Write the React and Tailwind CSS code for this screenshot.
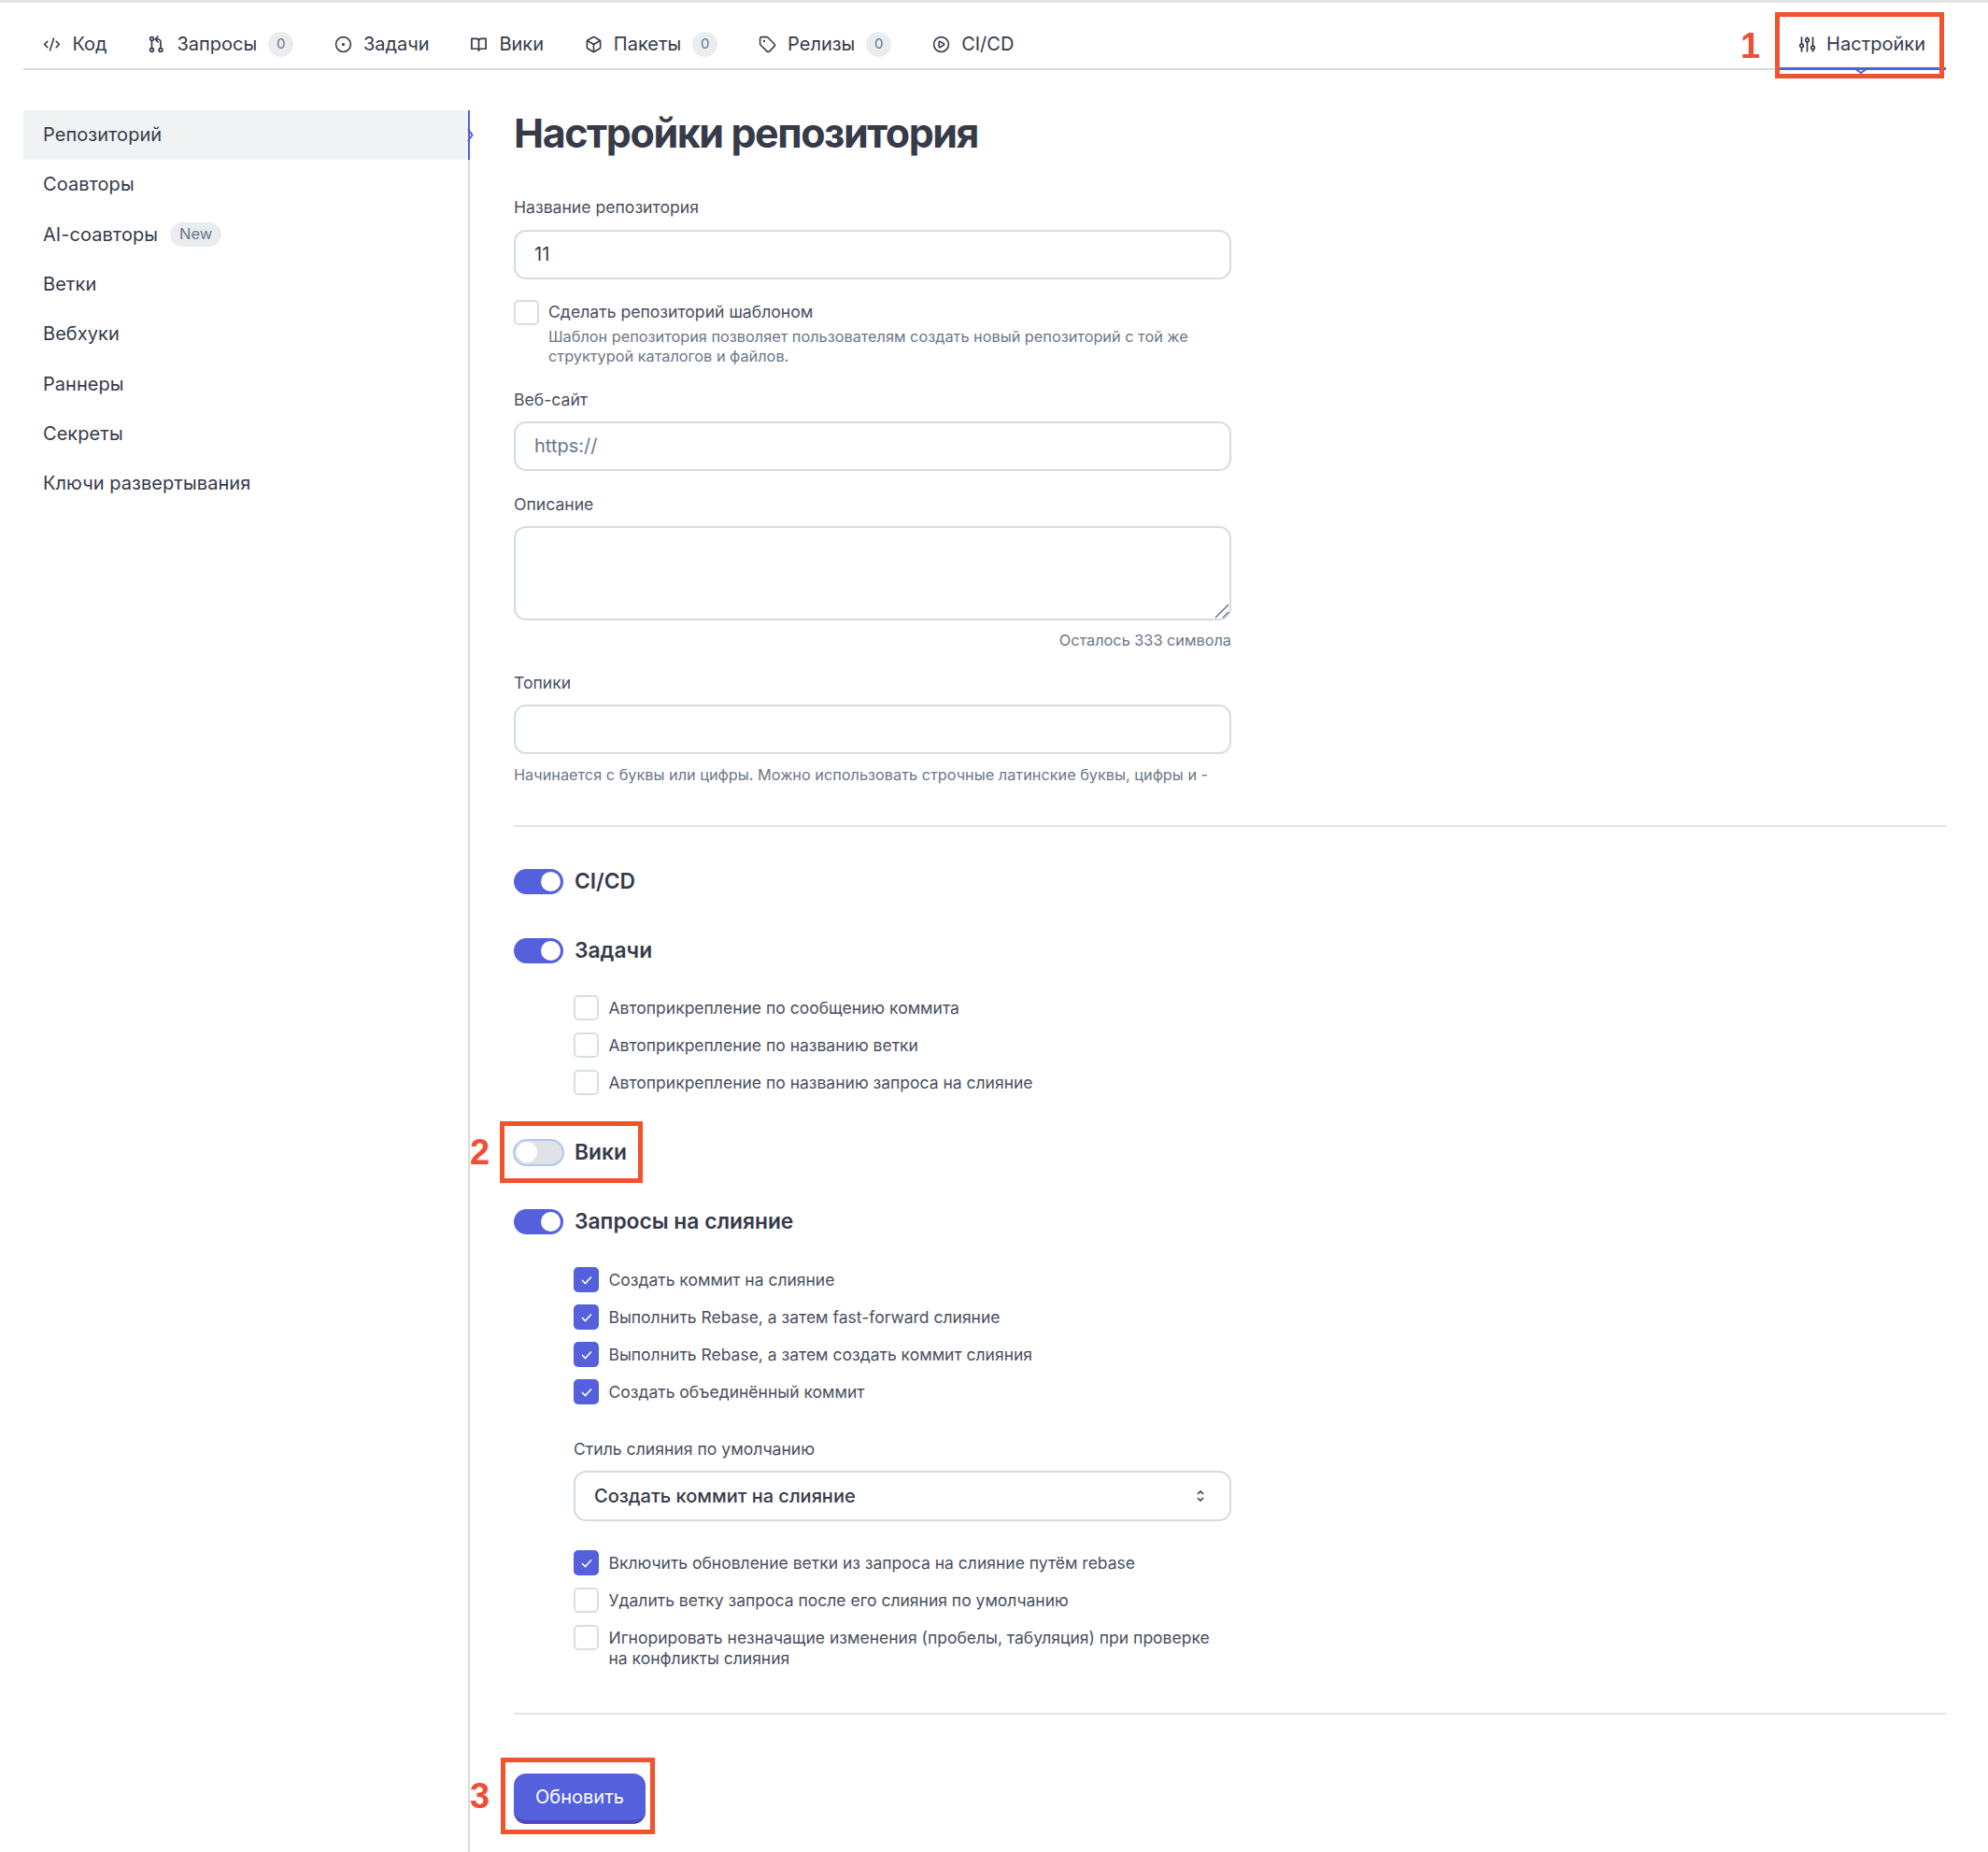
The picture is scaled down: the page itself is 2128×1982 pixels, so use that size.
import React from "react";
import { CircleDot, Box, Tag, CirclePlay, CodeXml } from "lucide-react";

const PullIcon = () => (
  <svg width="19" height="19" viewBox="0 0 19 19" fill="none" stroke="#363b4a" strokeWidth="1.7" strokeLinecap="round" strokeLinejoin="round">
    <circle cx="4.5" cy="3.5" r="1.9" />
    <circle cx="4.5" cy="15.5" r="1.9" />
    <circle cx="14" cy="15.5" r="1.9" />
    <path d="M4.5 5.4v8.2M14 13.6V7a3 3 0 0 0-3-3H8.5M11 1L8.2 4 11 7" />
  </svg>
);

const BookIcon = () => (
  <svg width="19" height="19" viewBox="0 0 20 20" fill="none" stroke="#363b4a" strokeWidth="1.8" strokeLinejoin="round">
    <path d="M2 3.5h5.5A2.5 2.5 0 0 1 10 6v11a2 2 0 0 0-2-2H2zM18 3.5h-5.5A2.5 2.5 0 0 0 10 6v11a2 2 0 0 1 2-2h6z" />
  </svg>
);

const NavItem = ({ icon: Icon, label, badge }) => (
  <div className="flex items-center gap-3 px-[21.9px] h-full">
    <Icon size={19} strokeWidth={2} className="text-[#363b4a] shrink-0" />
    <span className="text-[20px] leading-none">{label}</span>
    {badge !== undefined && (
      <span className="w-[27px] h-[27px] rounded-full bg-[#eaedf0] text-[#6b7789] text-[15px] flex items-center justify-center">{badge}</span>
    )}
  </div>
);

const Sliders = () => (
  <svg width="19" height="19" viewBox="0 0 19 19" fill="none" stroke="#363b4a" strokeWidth="1.7" strokeLinecap="round">
    <path d="M3.5 2v7M3.5 13v4M9.5 2v1M9.5 7v10M15.5 2v9M15.5 15v2" />
    <circle cx="3.5" cy="11" r="1.8" />
    <circle cx="9.5" cy="5" r="1.8" />
    <circle cx="15.5" cy="13" r="1.8" />
  </svg>
);

const SideItem = ({ children, active }) => (
  <div className={`relative h-[53.3px] flex items-center gap-[13px] pl-[21px] pb-px text-[20px] tracking-[0.05px] ${active ? "bg-[#f1f2f4]" : ""}`}>
    {children}
    {active && (
      <>
        <div className="absolute right-[-2px] top-0 bottom-0 w-[2px] bg-[#5460dc]" />
        <svg className="absolute right-[-6px] top-[18px]" width="7" height="17" viewBox="0 0 7 17" fill="none">
          <path d="M1 2l4.5 6.5L1 15" stroke="#5460dc" strokeWidth="2" />
        </svg>
      </>
    )}
  </div>
);

const Label = ({ children, className = "" }) => (
  <div className={`text-[17.6px] leading-[24px] text-[#4a5060] ${className}`}>{children}</div>
);

const Input = ({ children, muted, className = "" }) => (
  <div className={`w-[768px] h-[53px] border-2 border-[#d5dbe3] rounded-[13px] pl-[20px] pb-px flex items-center text-[20px] ${muted ? "text-[#6b7789]" : ""} ${className}`}>{children}</div>
);

const Hint = ({ children, className = "" }) => (
  <div className={`text-[16.3px] leading-[21px] text-[#6b7789] ${className}`}>{children}</div>
);

const Toggle = ({ on }) =>
  on ? (
    <div className="w-[53px] h-[27px] rounded-full bg-[#5460dc] flex items-center justify-end pr-[3px] shrink-0">
      <div className="w-[21px] h-[21px] rounded-full bg-white" />
    </div>
  ) : (
    <div className="w-[55px] h-[29px] -mx-px rounded-full bg-[#dfe3e8] border-2 border-[#b0c6f2] flex items-center pl-[2px] shrink-0">
      <div className="w-[22px] h-[22px] rounded-full bg-white" />
    </div>
  );

const ToggleRow = ({ on, children, className = "" }) => (
  <div className={`flex items-center gap-3 h-[28px] text-[22.8px] font-semibold ${className}`}>
    <Toggle on={on} />
    <span>{children}</span>
  </div>
);

const Check = ({ on, className = "" }) =>
  on ? (
    <div className={`w-[27px] h-[27px] rounded-[5px] bg-[#5460dc] flex items-center justify-center shrink-0 ${className}`}>
      <svg width="12" height="10" viewBox="0 0 12 10" fill="none">
        <path d="M1 5l3.5 3.5L11 1.5" stroke="white" strokeWidth="1.6" />
      </svg>
    </div>
  ) : (
    <div className={`w-[27px] h-[27px] rounded-[5px] border-2 border-[#d9dee5] bg-white shrink-0 ${className}`} />
  );

const CheckRow = ({ on, children, className = "" }) => (
  <div className={`flex items-start gap-[10.5px] text-[17.5px] leading-[22px] text-[#4a5060] ${className}`}>
    <Check on={on} />
    <span className="pt-[3px]">{children}</span>
  </div>
);

const Rows = ({ items, className = "" }) => (
  <div className={`flex flex-col gap-[13px] ${className}`}>
    {items.map((it) => (
      <CheckRow key={it[0]} on={it[1]}>{it[0]}</CheckRow>
    ))}
  </div>
);

const Mark = ({ className = "" }) => <div className={`absolute border-[5px] border-[#f0532d] pointer-events-none ${className}`} />;
const Num = ({ children, className = "" }) => (
  <div className={`absolute text-[38px] leading-none font-bold text-[#ee4f37] ${className}`} style={{ fontFamily: "Liberation Sans, sans-serif" }}>{children}</div>
);

export default function App() {
  return (
    <div className="relative min-h-[1982px] bg-white text-[#363b4a]" style={{ fontFamily: "Inter, sans-serif" }}>
      <div className="h-[3px] bg-[#e4e4e4]" />
      <div className="relative ml-[24.5px] mr-[45px] h-[72px] border-b-2 border-[#d5dbe3] flex items-center pt-[18px]">
        <NavItem icon={CodeXml} label="Код" />
        <NavItem icon={PullIcon} label="Запросы" badge={0} />
        <NavItem icon={CircleDot} label="Задачи" />
        <NavItem icon={BookIcon} label="Вики" />
        <NavItem icon={Box} label="Пакеты" badge={0} />
        <NavItem icon={Tag} label="Релизы" badge={0} />
        <NavItem icon={CirclePlay} label="CI/CD" />
        <div className="ml-auto relative flex items-center gap-[11px] h-full pl-[20px] pr-[22px] text-[20px]">
          <Sliders />
          <span>Настройки</span>
          <div className="absolute left-0 right-0 bottom-[-2px] h-[3px] bg-[#5460dc]" />
          <svg className="absolute left-[79px] bottom-[-7px]" width="16" height="7" viewBox="0 0 16 7" fill="none">
            <path d="M1 0l7 5 7-5" stroke="#5460dc" strokeWidth="2" />
          </svg>
        </div>
      </div>

      <div className="flex pl-[25px] pr-[45px] mt-[43px]">
        <div className="w-[476px] shrink-0">
          <SideItem active>Репозиторий</SideItem>
          <SideItem>Соавторы</SideItem>
          <SideItem>
            AI-соавторы
            <span className="px-[10px] h-[26px] rounded-full bg-[#eaedf0] text-[#6b7789] text-[16.5px] flex items-center">New</span>
          </SideItem>
          <SideItem>Ветки</SideItem>
          <SideItem>Вебхуки</SideItem>
          <SideItem>Раннеры</SideItem>
          <SideItem>Секреты</SideItem>
          <SideItem>Ключи развертывания</SideItem>
        </div>
        <div className="flex-1 border-l-2 border-[#d5dbe3] pl-[47px] min-h-[1864px]">
          <h1 className="text-[43px] leading-[48px] font-bold tracking-[-1.45px]">Настройки репозитория</h1>

          <Label className="mt-[44px]">Название репозитория</Label>
          <Input className="mt-[12px]">11</Input>

          <div className="flex gap-[10px] mt-[22px]">
            <Check />
            <div>
              <div className="text-[17.6px] leading-[26px] text-[#4a5060]">Сделать репозиторий шаблоном</div>
              <Hint className="w-[730px] mt-[3px]">Шаблон репозитория позволяет пользователям создать новый репозиторий с той же структурой каталогов и файлов.</Hint>
            </div>
          </div>

          <Label className="mt-[24px]">Веб-сайт</Label>
          <Input muted className="mt-[11px]">https://</Input>

          <Label className="mt-[24px]">Описание</Label>
          <div className="relative w-[768px] h-[101px] mt-[11px] border-2 border-[#d5dbe3] rounded-[13px]">
            <svg className="absolute right-0 bottom-0" width="16" height="16" viewBox="0 0 16 16" fill="none" stroke="#5b6170" strokeWidth="1.2">
              <path d="M1 15L15 1M9 15L15 9" />
            </svg>
          </div>
          <Hint className="w-[768px] text-right mt-[11px]">Осталось 333 символа</Hint>

          <Label className="mt-[23px]">Топики</Label>
          <Input className="mt-[11px]" />
          <Hint className="mt-[12px]">Начинается с буквы или цифры. Можно использовать строчные латинские буквы, цифры и -</Hint>

          <div className="h-[2px] bg-[#e0e4ea] mt-[43px]" />

          <ToggleRow on className="mt-[44px]">CI/CD</ToggleRow>
          <ToggleRow on className="mt-[46px]">Задачи</ToggleRow>
          <Rows className="ml-[64px] mt-[34px]" items={[
            ["Автоприкрепление по сообщению коммита"],
            ["Автоприкрепление по названию ветки"],
            ["Автоприкрепление по названию запроса на слияние"],
          ]} />
          <ToggleRow className="mt-[47px]">Вики</ToggleRow>
          <ToggleRow on className="mt-[46px]">Запросы на слияние</ToggleRow>
          <Rows className="ml-[64px] mt-[35px]" items={[
            ["Создать коммит на слияние", true],
            ["Выполнить Rebase, а затем fast-forward слияние", true],
            ["Выполнить Rebase, а затем создать коммит слияния", true],
            ["Создать объединённый коммит", true],
          ]} />
          <Label className="ml-[64px] mt-[36px]">Стиль слияния по умолчанию</Label>
          <div className="ml-[64px] mt-[11px] w-[704px] h-[54px] border-2 border-[#d5dbe3] rounded-[13px] flex items-center justify-between pl-[20px] pr-[27px] text-[20px] font-medium">
            <span>Создать коммит на слияние</span>
            <svg width="8" height="12" viewBox="0 0 8 12" fill="none" stroke="#363b4a" strokeWidth="1.6">
              <path d="M1 4l3-3 3 3M1 8l3 3 3-3" />
            </svg>
          </div>
          <Rows className="ml-[64px] mt-[31px] w-[704px]" items={[
            ["Включить обновление ветки из запроса на слияние путём rebase", true],
            ["Удалить ветку запроса после его слияния по умолчанию"],
            ["Игнорировать незначащие изменения (пробелы, табуляция) при проверке на конфликты слияния"],
          ]} />
          <div className="h-[2px] bg-[#e0e4ea] mt-[47px]" />
          <button className="mt-[63px] w-[141px] h-[54px] rounded-[13px] bg-[#5460dc] border-b-[4px] border-[#4f47c4] text-white text-[20px] flex items-center justify-center">Обновить</button>
        </div>
      </div>

      <Mark className="left-[1900px] top-[13px] w-[181px] h-[71px]" />
      <Mark className="left-[535px] top-[1200px] w-[153px] h-[66px]" />
      <Mark className="left-[536px] top-[1881px] w-[165px] h-[82px]" />
      <Num className="left-[1863px] top-[30px]">1</Num>
      <Num className="left-[503px] top-[1214px]">2</Num>
      <Num className="left-[503px] top-[1903px]">3</Num>
    </div>
  );
}
